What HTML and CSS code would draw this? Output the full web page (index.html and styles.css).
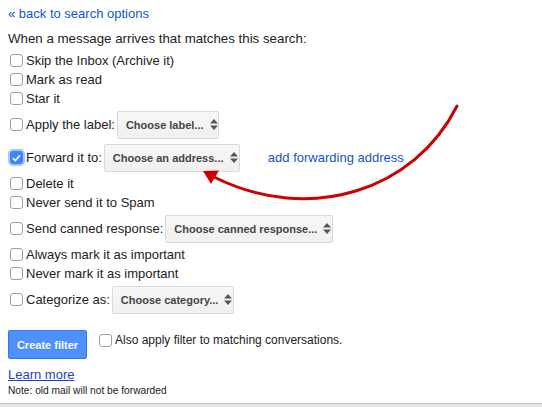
FILE: index.html
```html
<!DOCTYPE html>
<html lang="en">
<head>
    <meta charset="UTF-8">
    <title>Create filter</title>
    <link rel="stylesheet" href="styles.css">
</head>
<body>
    <div class="page">
        <a class="back-link" href="#">&laquo; back to search options</a>
        <div class="intro">When a message arrives that matches this search:</div>

        <div class="actions">
            <div class="row"><span class="box"></span>Skip the Inbox (Archive it)</div>
            <div class="row"><span class="box"></span>Mark as read</div>
            <div class="row"><span class="box"></span>Star it</div>
            <div class="row tall">
                <span class="box"></span>Apply the label:
                <span class="picker picker-label">Choose label...<svg class="updown" width="8" height="11" viewBox="0 0 8 11"><path d="M4 0L8 4.5H0Z M4 11L0 6.5H8Z" fill="#555"/></svg></span>
            </div>
            <div class="row tall">
                <span class="box checked"><svg width="9" height="8" viewBox="0 0 9 8"><path d="M1 4.2L3.4 6.5L8 1.2" fill="none" stroke="#fff" stroke-width="1.6"/></svg></span>Forward it to:
                <span class="picker picker-address">Choose an address...<svg class="updown" width="8" height="11" viewBox="0 0 8 11"><path d="M4 0L8 4.5H0Z M4 11L0 6.5H8Z" fill="#555"/></svg></span>
                <a class="add-link" href="#">add forwarding address</a>
            </div>
            <div class="row"><span class="box"></span>Delete it</div>
            <div class="row"><span class="box"></span>Never send it to Spam</div>
            <div class="row tall">
                <span class="box"></span>Send canned response:
                <span class="picker picker-canned">Choose canned response...<svg class="updown" width="8" height="11" viewBox="0 0 8 11"><path d="M4 0L8 4.5H0Z M4 11L0 6.5H8Z" fill="#555"/></svg></span>
            </div>
            <div class="row"><span class="box"></span>Always mark it as important</div>
            <div class="row"><span class="box"></span>Never mark it as important</div>
            <div class="row tall">
                <span class="box"></span>Categorize as:
                <span class="picker picker-category">Choose category...<svg class="updown" width="8" height="11" viewBox="0 0 8 11"><path d="M4 0L8 4.5H0Z M4 11L0 6.5H8Z" fill="#555"/></svg></span>
            </div>
        </div>

        <div class="submit-row">
            <button class="create-btn">Create filter</button>
            <div class="row also"><span class="box"></span>Also apply filter to matching conversations.</div>
        </div>

        <a class="learn-link" href="#">Learn more</a>
        <div class="note">Note: old mail will not be forwarded</div>
    </div>
    <div class="bottom-strip"></div>

    <!-- annotation arrow drawn over the form -->
    <svg class="annotation" width="542" height="407" viewBox="0 0 542 407">
        <path d="M457 106C415 190 310 225 214 177" fill="none" stroke="#cc0000" stroke-width="3" stroke-linecap="round"/>
        <path d="M203 171L219 170.5L211 184Z" fill="#cc0000"/>
    </svg>
</body>
</html>
```

FILE: styles.css
```css
body { margin: 0; height: 407px; overflow: hidden; position: relative; font-family: "Liberation Sans", Arial, sans-serif; font-size: 13px; color: #222; background: #fff; }
.page { padding: 0 8px; }
a { color: #15c; text-decoration: none; }
.back-link { display: block; margin-top: 4px; line-height: 20px; }
.intro { margin-top: 5px; line-height: 20px; font-size: 13.3px; }
.actions { margin-top: 2px; }
.row { display: flex; align-items: center; height: 19px; white-space: nowrap; }
.row.tall { height: 33px; }
.box { width: 11px; height: 11px; border: 1px solid #a0a0a0; border-radius: 3px; background: #fff; margin: 0 3px 0 2px; flex: none; display: flex; align-items: center; justify-content: center; }
.box.checked { background: #3b87f5; border-color: #3b87f5; box-shadow: 0 0 0 2px rgba(92,152,245,0.55); }
.picker { display: flex; align-items: center; justify-content: space-between; box-sizing: border-box; height: 28px; padding: 0 9px 0 8px; margin-left: 2px; border: 1px solid #d9d9d9; border-radius: 2px; background: linear-gradient(#f7f7f7, #f0f0f0); font-size: 11px; font-weight: bold; color: #444; }
.updown { margin-left: 6px; flex: none; }
.picker-label { width: 102px; }
.picker-address { width: 136px; }
.picker-canned { width: 168px; }
.picker-category { width: 122px; }
.add-link { margin-left: 28px; }
.submit-row { display: flex; align-items: flex-start; margin-top: 14px; }
.create-btn { width: 79px; height: 29px; border: 1px solid #3079ed; border-radius: 2px; background: #4d90fe; color: #fff; font-family: inherit; font-size: 11px; font-weight: bold; text-shadow: 0 1px rgba(0,0,0,0.1); padding: 0; }
.row.also { margin-left: 10px; height: 20px; font-size: 12px; }
.learn-link { display: inline-block; margin-top: 6px; line-height: 19px; color: #1a3fd0; text-decoration: underline; }
.note { font-size: 10.2px; line-height: 14px; }
.bottom-strip { position: absolute; left: 0; right: 0; bottom: 0; height: 3px; border-top: 1px solid #c4c4c4; background: #e6e6e6; }
.annotation { position: absolute; left: 0; top: 0; pointer-events: none; }
```
